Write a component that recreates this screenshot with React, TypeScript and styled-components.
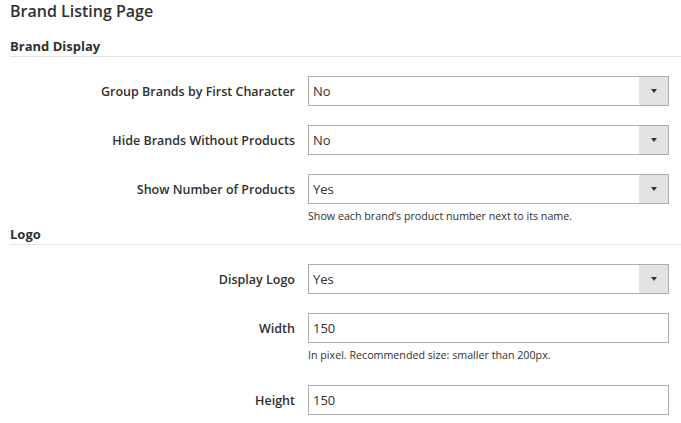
import React from 'react';
import styled, { createGlobalStyle } from 'styled-components';

const GlobalStyle = createGlobalStyle`
  html, body {
    margin: 0;
    padding: 0;
    background: #fff;
  }
  body {
    font-family: 'Open Sans', 'Liberation Sans', sans-serif;
    color: #303030;
  }
`;

const Page = styled.div`
  padding: 0 0 0 10px;
`;

const PageTitle = styled.h1`
  margin: 0;
  font-size: 16px;
  font-weight: 600;
  line-height: 22px;
  color: #303030;
`;

const SectionTitle = styled.h2<{ $first?: boolean }>`
  margin: ${(p) => (p.$first ? '15px' : '-2px')} 0 0;
  font-size: 13px;
  font-weight: 700;
  line-height: 19px;
  color: #303030;
  border-bottom: 1px solid #e3e3e3;
`;

const Fields = styled.div`
  display: flex;
  flex-direction: column;
  gap: 19px;
  padding: 19px 12px 0 0;
`;

const Row = styled.div`
  display: grid;
  grid-template-columns: 285px 1fr;
  column-gap: 13px;
  align-items: start;
`;

const Label = styled.label`
  height: 30px;
  display: flex;
  align-items: center;
  justify-content: flex-end;
  font-size: 12.5px;
  font-weight: 600;
  color: #303030;
`;

const Control = styled.div`
  display: flex;
  flex-direction: column;
`;

const Box = styled.div`
  height: 30px;
  box-sizing: border-box;
  border: 1px solid #adadad;
  display: flex;
  align-items: center;
  background: #fff;
`;

const Value = styled.span`
  flex: 1;
  padding-left: 4px;
  font-size: 13px;
  color: #303030;
`;

const Arrow = styled.span`
  width: 29px;
  align-self: stretch;
  background: #e3e3e3;
  display: flex;
  align-items: center;
  justify-content: center;
  &::after {
    content: '';
    border-left: 3.5px solid transparent;
    border-right: 3.5px solid transparent;
    border-top: 4px solid #333;
  }
`;

const Note = styled.div`
  margin: 5px 0 3px;
  font-size: 10.7px;
  line-height: 15px;
  color: #303030;
`;

type Field = {
  label: string;
  value: string;
  select?: boolean;
  note?: string;
};

const brandDisplay: Field[] = [
  { label: 'Group Brands by First Character', value: 'No', select: true },
  { label: 'Hide Brands Without Products', value: 'No', select: true },
  {
    label: 'Show Number of Products',
    value: 'Yes',
    select: true,
    note: 'Show each brand\u2019s product number next to its name.',
  },
];

const logo: Field[] = [
  { label: 'Display Logo', value: 'Yes', select: true },
  { label: 'Width', value: '150', note: 'In pixel. Recommended size: smaller than 200px.' },
  { label: 'Height', value: '150' },
];

const FieldRow: React.FC<{ field: Field }> = ({ field }) => (
  <Row>
    <Label>{field.label}</Label>
    <Control>
      <Box>
        <Value>{field.value}</Value>
        {field.select && <Arrow />}
      </Box>
      {field.note && <Note>{field.note}</Note>}
    </Control>
  </Row>
);

const App: React.FC = () => {
  return (
    <>
      <GlobalStyle />
      <Page>
        <PageTitle>Brand Listing Page</PageTitle>
        <SectionTitle $first>Brand Display</SectionTitle>
        <Fields>
          {brandDisplay.map((f) => (
            <FieldRow key={f.label} field={f} />
          ))}
        </Fields>
        <SectionTitle>Logo</SectionTitle>
        <Fields>
          {logo.map((f) => (
            <FieldRow key={f.label} field={f} />
          ))}
        </Fields>
      </Page>
    </>
  );
};

export default App;
